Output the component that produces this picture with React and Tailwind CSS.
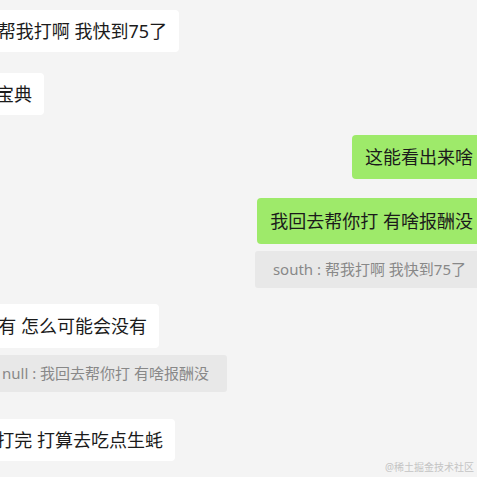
import React from "react";

const font = { fontFamily: '"Noto Sans", "Noto Sans CJK SC", sans-serif' };

function LeftBubble({ text, edge, top, py = "py-[9px]" }) {
  return (
    <div className={`flex justify-end ${edge} ${top}`}>
      <div
        className={`shrink-0 whitespace-nowrap bg-white rounded-[4px] px-3 ${py} text-[18px] leading-[24px] text-[#1b1b1b]`}
      >
        {text}
      </div>
    </div>
  );
}

function RightBubble({ text, top, py = "py-[10px]" }) {
  return (
    <div className={`flex justify-end -mr-[9px] ${top}`}>
      <div
        className={`shrink-0 whitespace-nowrap bg-[#9eea6a] rounded-[4px] px-[13px] ${py} text-[18px] leading-[24px] text-[#1b1b1b]`}
      >
        {text}
      </div>
    </div>
  );
}

function Quote({ text, className }) {
  return (
    <div className={`flex justify-end ${className}`}>
      <div className="shrink-0 whitespace-nowrap bg-[#e8e8e8] rounded-[3px] px-[18px] py-[9px] text-[15px] leading-[19px] text-[#888888]">
        {text}
      </div>
    </div>
  );
}

export default function App() {
  return (
    <div
      className="relative w-[477px] h-[477px] overflow-hidden bg-[#f4f4f4]"
      style={font}
    >
      <div className="flex flex-col">
        <LeftBubble text="帮我打啊 我快到75了" edge="w-[179px]" top="mt-[10px]" />
        <LeftBubble text="宝典" edge="w-[44px]" top="mt-[21px]" />
        <RightBubble text="这能看出来啥" top="mt-[20px]" />
        <RightBubble text="我回去帮你打 有啥报酬没" top="mt-[19px]" py="py-[11px]" />
        <Quote text="south : 帮我打啊 我快到75了" className="-mr-[7px] mt-[7px]" />
        <LeftBubble text="有 怎么可能会没有" edge="w-[159px]" top="mt-[16px]" py="py-[10px]" />
        <Quote text="null : 我回去帮你打 有啥报酬没" className="w-[227px] mt-[7px]" />
        <LeftBubble text="打完 打算去吃点生蚝" edge="w-[175px]" top="mt-[27px]" />
      </div>
      <div className="absolute right-[3px] bottom-[3px] text-[10px] leading-[14px] text-[#c4c4c4]">
        @稀土掘金技术社区
      </div>
    </div>
  );
}
